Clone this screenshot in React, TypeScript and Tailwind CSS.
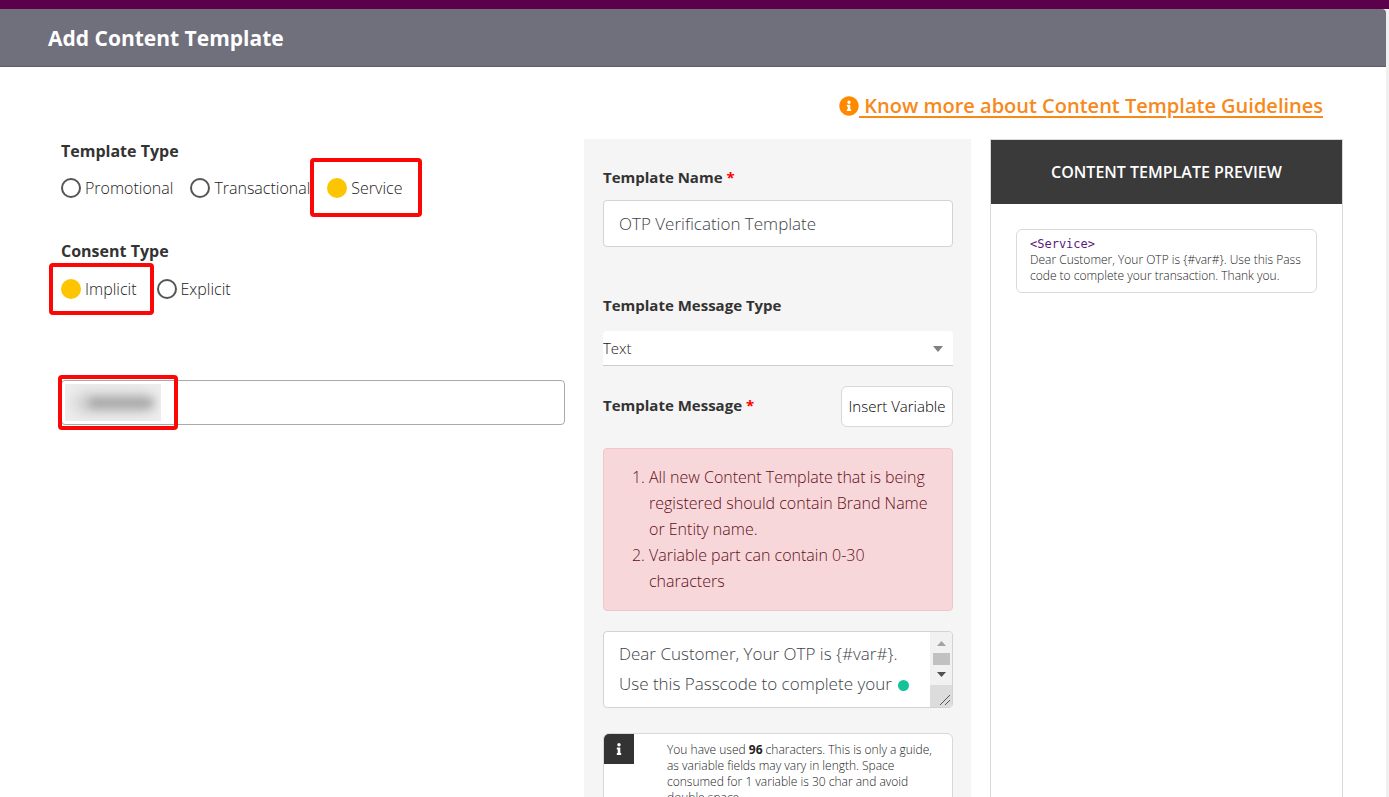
import { ReactNode } from 'react'
import { FaInfo, FaInfoCircle } from 'react-icons/fa'

function Highlight({ className }: { className: string }) {
    return <span aria-hidden="true" className={`pointer-events-none absolute rounded-sm border-4 border-[#fd0606] ${className}`} />
}

function Radio(props: { name: string; label: string; checked?: boolean; children?: ReactNode }) {
    const { name, label, checked, children } = props;

    return (
        <label className="relative flex items-center gap-1 text-base leading-6">
            <input
                type="radio"
                name={name}
                defaultChecked={checked}
                className="size-5 shrink-0 appearance-none rounded-full border-2 border-[#555] bg-white checked:border-[#fdc500] checked:bg-[#fdc500]"
            />
            {label}
            {children}
        </label>
    )
}

function Required() {
    return <span className="text-[#f00]"> *</span>
}

export default function App() {
    return (
        <div className="h-screen overflow-hidden bg-[#f0f0f0] font-['Open_Sans',sans-serif] font-light text-[#222]">
            <div className="h-[9px] bg-[#5c004b]" />
            <div className="mr-[3px] min-h-full bg-white">
                <header className="flex h-[58px] items-center rounded-tr border-b border-[#5f5c70] bg-[#706f7c] px-12">
                    <h1 className="text-[21px] font-bold leading-8 text-white">Add Content Template</h1>
                </header>

                <div className="flex justify-end pt-[25px] pr-[63px]">
                    <a href="#" className="flex items-center text-xl font-semibold leading-7 text-[#f7891b]">
                        <FaInfoCircle className="size-5 text-[#ff8a00]" />
                        <span className="whitespace-pre underline decoration-2 underline-offset-3"> Know more about Content Template Guidelines</span>
                    </a>
                </div>

                <main className="mt-[19px] grid grid-cols-[minmax(0,504fr)_minmax(0,387fr)_minmax(0,353fr)] gap-[19px] pl-[61px] pr-[43px]">
                    <section>
                        <fieldset>
                            <legend className="text-base font-bold leading-6 text-[#333]">Template Type</legend>
                            <div className="mt-[13px] flex gap-[17px]">
                                <Radio name="template-type" label="Promotional" />
                                <Radio name="template-type" label="Transactional" />
                                <Radio name="template-type" label="Service" checked>
                                    <Highlight className="-left-[17px] -right-5 -top-[18px] -bottom-[17px]" />
                                </Radio>
                            </div>
                        </fieldset>
                        <fieldset className="mt-[39px]">
                            <legend className="text-base font-bold leading-6 text-[#333]">Consent Type</legend>
                            <div className="mt-[14px] flex gap-5">
                                <Radio name="consent-type" label="Implicit" checked>
                                    <Highlight className="-left-3 -right-[17px] -top-[14px] -bottom-[14px]" />
                                </Radio>
                                <Radio name="consent-type" label="Explicit" />
                            </div>
                        </fieldset>
                        <div className="relative mt-[79px]">
                            <input
                                type="text"
                                aria-label="Header"
                                className="block h-[45px] w-full rounded border border-[#a9a9a9] bg-white px-4 text-lg"
                            />
                            <div aria-hidden="true" className="pointer-events-none absolute left-1 top-1 flex h-[37px] w-24 items-center justify-center overflow-hidden bg-[#eeeeee]">
                                <span className="h-5 w-20 rounded-full bg-[#cfcfcf] blur-[7px]" />
                                <span className="absolute left-6 h-2.5 w-16 bg-[#a5a5a5] blur-[5px]" />
                            </div>
                            <Highlight className="-left-[3px] -top-[5px] h-[55px] w-[120px]" />
                        </div>
                    </section>

                    <section className="bg-[#f5f5f5] pl-[19px] pr-[18px] pt-[26px]">
                        <label htmlFor="name" className="block text-[15px] font-bold leading-6 text-[#333]">Template Name<Required /></label>
                        <input
                            id="name"
                            type="text"
                            defaultValue="OTP Verification Template"
                            className="mt-[11px] block h-[47px] w-full rounded border border-[#ced4da] bg-white px-[15px] text-[17px] text-[#3c4248]"
                        />

                        <label htmlFor="message-type" className="mt-[46px] block text-[15px] font-bold leading-6 text-[#333]">Template Message Type</label>
                        <div className="relative mt-3.5">
                            <select id="message-type" className="block h-[35px] w-full appearance-none rounded-t border-b border-[#ccc] bg-white pr-8 text-[15px]">
                                <option>Text</option>
                            </select>
                            <svg viewBox="0 0 10 6" className="pointer-events-none absolute right-2.5 top-[15px] h-1.5 w-2.5 fill-[#808080]">
                                <path d="M0 0h10L5 6z" />
                            </svg>
                        </div>

                        <div className="mt-5 flex items-center justify-between">
                            <label htmlFor="message" className="pb-1 text-[15px] font-bold leading-6 text-[#333]">Template Message<Required /></label>
                            <button type="button" className="h-[41px] w-28 whitespace-nowrap rounded-md border border-[#d8d8d8] bg-white text-[15px] text-black">Insert Variable</button>
                        </div>

                        <div className="mt-[21px] rounded border border-[#f1c6cb] bg-[#f8d7da] pt-[15px] pb-4 pl-[45px] pr-[19px] text-base leading-[26px] text-[#5f0f19]">
                            <ol className="list-decimal">
                                <li>All new Content Template that is being registered should contain Brand Name or Entity name.</li>
                                <li>Variable part can contain 0-30 characters</li>
                            </ol>
                        </div>

                        <div className="relative mt-5 flex h-[77px] overflow-hidden rounded border border-[#ced4da] bg-white">
                            <textarea
                                id="message"
                                defaultValue="Dear Customer, Your OTP is {#var#}. Use this Passcode to complete your transaction. Thank you."
                                className="block h-full min-w-0 flex-1 resize-none overflow-hidden px-[15px] pt-[7px] text-[17px] leading-[30px] text-[#3c4248]"
                            />
                            <svg viewBox="0 0 22 75" className="h-[75px] w-[22px] shrink-0">
                                <path d="M0 0h22v75H0z" fill="#f1f1f1" />
                                <path d="M7 14l4.500-5 4.500 5z" fill="#a3a3a3" />
                                <path d="M3 21h17v12H3z" fill="#c1c1c1" />
                                <path d="M7 40h9l-4.500 5z" fill="#505050" />
                                <path d="M0 53h22v22H0z" fill="#dcdcdc" />
                                <path d="M10 73l10-10M15 73l5-5" stroke="#555" fill="none" />
                            </svg>
                            <span className="absolute right-[43px] bottom-4 size-[11px] rounded-full bg-[#15c39a]" />
                        </div>

                        <div className="mt-[25px] flex gap-[33px] overflow-hidden rounded-md border border-[#d8d8d8] bg-white pr-2">
                            <div className="flex size-[30px] shrink-0 items-center justify-center bg-[#333] text-white">
                                <FaInfo className="size-3" />
                            </div>
                            <p className="py-2 text-xs leading-4">
                                You have used <b className="font-bold">96</b> characters. This is only a guide, as variable fields may vary in length. Space consumed for 1 variable is 30 char and avoid double space
                            </p>
                        </div>
                    </section>

                    <aside className="min-h-[700px] border border-[#d9d9d9]">
                        <h2 className="flex h-16 items-center justify-center bg-[#3a3a3a] text-base font-semibold text-white">CONTENT TEMPLATE PREVIEW</h2>
                        <div className="mx-[25px] mt-[25px] rounded-md border border-[#d9d9d9] px-[13px] pt-1.5 pb-2 text-xs leading-4">
                            <code className="block font-['DejaVu_Sans_Mono',monospace] text-xs leading-4 text-[#5c1a7c]">&lt;Service&gt;</code>
                            <p className="whitespace-nowrap">Dear Customer, Your OTP is {'{#var#}'}. Use this Pass<br />code to complete your transaction. Thank you.</p>
                        </div>
                    </aside>
                </main>
            </div>
        </div>
    )
}
